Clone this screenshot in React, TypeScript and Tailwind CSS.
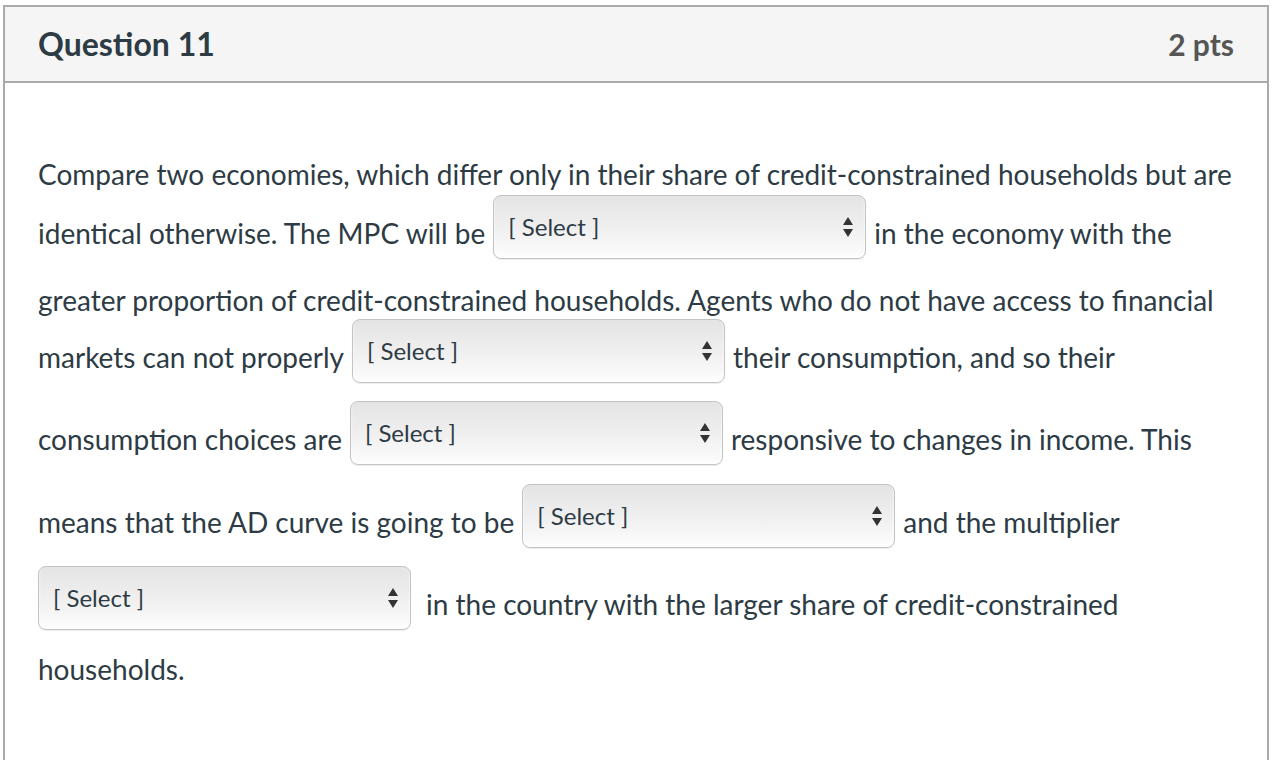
import React from "react";

const Arrows = () => (
  <svg width="10" height="20" viewBox="0 0 10 20" className="shrink-0">
    <path d="M5 0 L10 8 L0 8 Z" fill="#333" />
    <path d="M0 12 L10 12 L5 20 Z" fill="#333" />
  </svg>
);

const Select = ({ className = "" }: { className?: string }) => (
  <div
    className={`h-[64px] w-[373px] shrink-0 rounded-[8px] border border-[#c4c4c4] bg-gradient-to-b from-[#e4e4e4] via-[#efefef] to-[#fdfdfd] shadow-[inset_0_-2px_3px_rgba(255,255,255,0.9),0_1px_1px_rgba(0,0,0,0.08)] flex items-center justify-between pl-[14px] pr-[12px] ${className}`}
  >
    <span className="text-[24px] leading-none text-[#2d3b45]">[ Select ]</span>
    <Arrows />
  </div>
);

const T = ({ children, className = "" }: { children: React.ReactNode; className?: string }) => (
  <span className={`whitespace-nowrap pt-[12px] ${className}`}>{children}</span>
);

export default function App() {
  return (
    <div className="w-[1280px] h-[760px] overflow-hidden bg-white" style={{ fontFamily: "Lato, 'Noto Sans', sans-serif" }}>
      <div className="ml-[3px] mt-[5px] w-[1266px] h-[800px] border-2 border-[#aaaaaa] bg-white">
        <div className="h-[76px] bg-[#f5f5f5] border-b-2 border-[#aaaaaa] flex items-center justify-between pl-[33px] pr-[33px]">
          <span className="text-[32px] font-bold text-[#2d3b45]">Question 11</span>
          <span className="text-[30px] font-bold text-[#555555]">2 pts</span>
        </div>
        <div className="pl-[33px] pt-[72px] text-[28px] text-[#2d3b45]">
          <div className="h-[38px] flex items-center whitespace-nowrap">
            Compare two economies, which differ only in their share of credit-constrained households but are
          </div>
          <div className="h-[64px] mt-[2px] flex items-center gap-[8px]">
            <T>identical otherwise. The MPC will be</T>
            <Select />
            <T>in the economy with the</T>
          </div>
          <div className="h-[38px] mt-[22px] flex items-center whitespace-nowrap">
            greater proportion of credit-constrained households. Agents who do not have access to financial
          </div>
          <div className="h-[64px] flex items-center gap-[8px]">
            <T>markets can not properly</T>
            <Select />
            <T>their consumption, and so their</T>
          </div>
          <div className="h-[64px] mt-[18px] flex items-center gap-[8px]">
            <T>consumption choices are</T>
            <Select />
            <T>responsive to changes in income. This</T>
          </div>
          <div className="h-[64px] mt-[19px] flex items-center gap-[8px]">
            <T>means that the AD curve is going to be</T>
            <Select />
            <T>and the multiplier</T>
          </div>
          <div className="h-[64px] mt-[18px] flex items-center gap-[15px]">
            <Select />
            <T>in the country with the larger share of credit-constrained</T>
          </div>
          <div className="h-[38px] mt-[20px] flex items-center whitespace-nowrap">households.</div>
        </div>
      </div>
    </div>
  );
}
